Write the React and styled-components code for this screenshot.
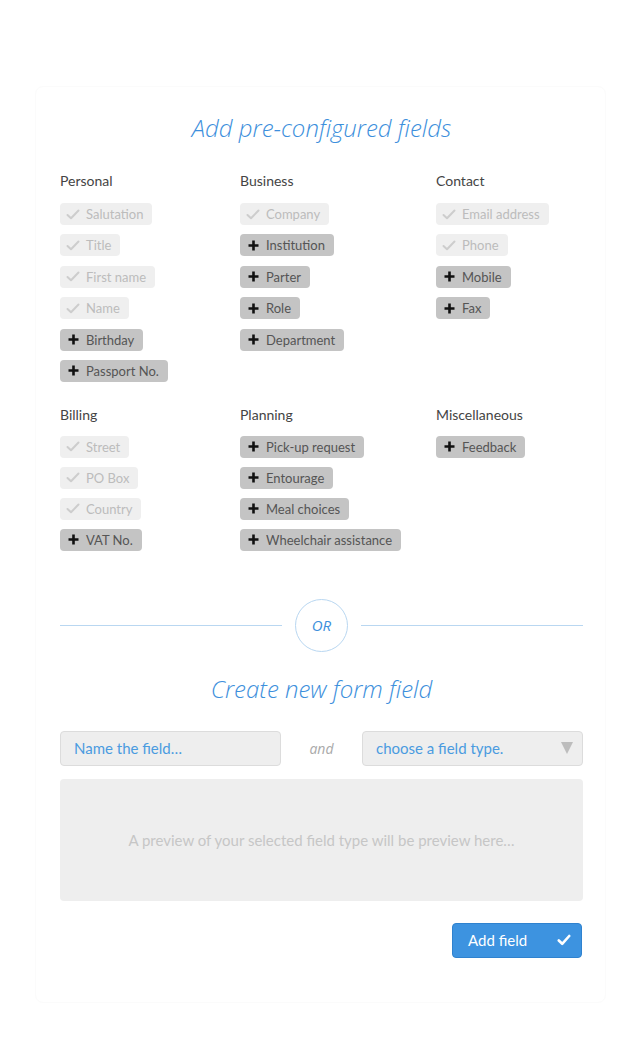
import React from "react";
import styled, { createGlobalStyle } from "styled-components";

const GlobalStyle = createGlobalStyle`
    html, body {
        margin: 0;
        padding: 0;
        background: #ffffff;
        font-family: "Lato", "Open Sans", "Liberation Sans", sans-serif;
    }
`;

const Page = styled.div`
    padding: 86px 34px 44px 35px;
`;

const Card = styled.div`
    box-sizing: border-box;
    width: 571px;
    min-height: 916px;
    border: 1px solid #fbfbfb;
    border-radius: 8px;
    padding: 26px 22px 44px 24px;
    display: flex;
    flex-direction: column;
`;

const Heading = styled.h2`
    margin: 0;
    text-align: center;
    font-family: "Open Sans", "Lato", sans-serif;
    font-size: 24px;
    line-height: 30px;
    font-weight: 300;
    font-style: italic;
    color: #3d8fdc;
`;

const Sections = styled.div`
    margin-top: 28px;
    display: flex;
    flex-direction: column;
    gap: 23px;
`;

const Grid = styled.div`
    display: grid;
    grid-template-columns: 180px 196px 1fr;
`;

const Column = styled.div`
    display: flex;
    flex-direction: column;
    align-items: flex-start;
`;

const ColumnTitle = styled.div`
    font-size: 14px;
    line-height: 20px;
    color: #444;
    margin-bottom: ${(p) => p.$gap}px;
`;

const ChipList = styled.div`
    display: flex;
    flex-direction: column;
    align-items: flex-start;
    gap: ${(p) => p.$gap}px;
`;

const Chip = styled.div`
    display: flex;
    align-items: center;
    gap: 6px;
    height: 22px;
    padding: 0 9px 0 6px;
    border-radius: 4px;
    font-size: 13px;
    background: ${(p) => (p.$added ? "#efefef" : "#c4c4c4")};
    color: ${(p) => (p.$added ? "#bcbcbc" : "#555")};
    cursor: pointer;
`;

const IconBox = styled.span`
    display: flex;
    width: 14px;
    justify-content: center;
`;

const CheckIcon = () => (
    <svg width="14" height="11" viewBox="0 0 14 11">
        <path d="M1.5 6 L5 9.3 L12.5 1.5" fill="none" stroke="#cdcdcd" strokeWidth="2" strokeLinecap="round" strokeLinejoin="round" />
    </svg>
);

const PlusIcon = () => (
    <svg width="11" height="11" viewBox="0 0 11 11">
        <path d="M5.5 0.5 V10.5 M0.5 5.5 H10.5" stroke="#111" strokeWidth="2.6" />
    </svg>
);

const Divider = styled.div`
    margin-top: 48px;
    display: flex;
    align-items: center;
    gap: 13px;
`;

const Line = styled.div`
    flex: 1;
    height: 1px;
    background: #b9d7f1;
`;

const OrCircle = styled.div`
    box-sizing: border-box;
    width: 53px;
    height: 53px;
    border-radius: 50%;
    border: 1.5px solid #b9d7f1;
    display: flex;
    align-items: center;
    justify-content: center;
    font-family: "Open Sans", "Lato", sans-serif;
    font-size: 15px;
    font-style: italic;
    color: #3d8fdc;
`;

const SubHeading = styled(Heading)`
    margin-top: 22px;
`;

const InputRow = styled.div`
    margin-top: 27px;
    display: grid;
    grid-template-columns: 221px 1fr 221px;
    align-items: center;
`;

const Field = styled.div`
    box-sizing: border-box;
    height: 35px;
    border: 1px solid #dcdcdc;
    border-radius: 4px;
    background: #eeeeee;
    padding: 0 9px 0 13px;
    display: flex;
    align-items: center;
    justify-content: space-between;
    font-size: 15px;
    color: #4a9be0;
`;

const And = styled.div`
    text-align: center;
    font-family: "Open Sans", "Lato", sans-serif;
    font-size: 14px;
    font-style: italic;
    color: #aaa;
`;

const Triangle = styled.span`
    width: 0;
    height: 0;
    border-left: 6.5px solid transparent;
    border-right: 6.5px solid transparent;
    border-top: 12px solid #bdbdbd;
`;

const Preview = styled.div`
    margin-top: 13px;
    height: 122px;
    border-radius: 4px;
    background: #eeeeee;
    display: flex;
    align-items: center;
    justify-content: center;
    font-size: 15px;
    color: #c6c6c6;
`;

const Actions = styled.div`
    margin-top: 22px;
    display: flex;
    justify-content: flex-end;
    padding-right: 1px;
`;

const Button = styled.button`
    box-sizing: border-box;
    width: 130px;
    height: 35px;
    border: 1px solid #2f82cf;
    border-radius: 4px;
    background: #3d93e0;
    color: #fff;
    font-family: inherit;
    font-size: 15px;
    padding: 0 10px 0 15px;
    display: flex;
    align-items: center;
    justify-content: space-between;
    cursor: pointer;
`;

const sections = [
    {
        titleGap: 12,
        chipGap: 9.4,
        columns: [
            { title: "Personal", items: [["Salutation", 1], ["Title", 1], ["First name", 1], ["Name", 1], ["Birthday", 0], ["Passport No.", 0]] },
            { title: "Business", items: [["Company", 1], ["Institution", 0], ["Parter", 0], ["Role", 0], ["Department", 0]] },
            { title: "Contact", items: [["Email address", 1], ["Phone", 1], ["Mobile", 0], ["Fax", 0]] },
        ],
    },
    {
        titleGap: 11,
        chipGap: 9,
        columns: [
            { title: "Billing", items: [["Street", 1], ["PO Box", 1], ["Country", 1], ["VAT No.", 0]] },
            { title: "Planning", items: [["Pick-up request", 0], ["Entourage", 0], ["Meal choices", 0], ["Wheelchair assistance", 0]] },
            { title: "Miscellaneous", items: [["Feedback", 0]] },
        ],
    },
];

function App() {
    return (
        <Page>
            <GlobalStyle />
            <Card>
                <Heading>Add pre-configured fields</Heading>
                <Sections>
                    {sections.map((section, i) => (
                        <Grid key={i}>
                            {section.columns.map((col) => (
                                <Column key={col.title}>
                                    <ColumnTitle $gap={section.titleGap}>{col.title}</ColumnTitle>
                                    <ChipList $gap={section.chipGap}>
                                        {col.items.map(([label, added]) => (
                                            <Chip key={label} $added={!!added}>
                                                <IconBox>{added ? <CheckIcon /> : <PlusIcon />}</IconBox>
                                                {label}
                                            </Chip>
                                        ))}
                                    </ChipList>
                                </Column>
                            ))}
                        </Grid>
                    ))}
                </Sections>

                <Divider>
                    <Line />
                    <OrCircle>OR</OrCircle>
                    <Line />
                </Divider>

                <SubHeading>Create new form field</SubHeading>

                <InputRow>
                    <Field>Name the field…</Field>
                    <And>and</And>
                    <Field>
                        choose a field type.
                        <Triangle />
                    </Field>
                </InputRow>

                <Preview>A preview of your selected field type will be preview here…</Preview>

                <Actions>
                    <Button>
                        Add field
                        <svg width="14" height="12" viewBox="0 0 14 12">
                            <path d="M1.8 6.5 L5.2 9.8 L12.2 2" fill="none" stroke="#fff" strokeWidth="2.6" strokeLinecap="round" strokeLinejoin="round" />
                        </svg>
                    </Button>
                </Actions>
            </Card>
        </Page>
    );
}

export default App;
